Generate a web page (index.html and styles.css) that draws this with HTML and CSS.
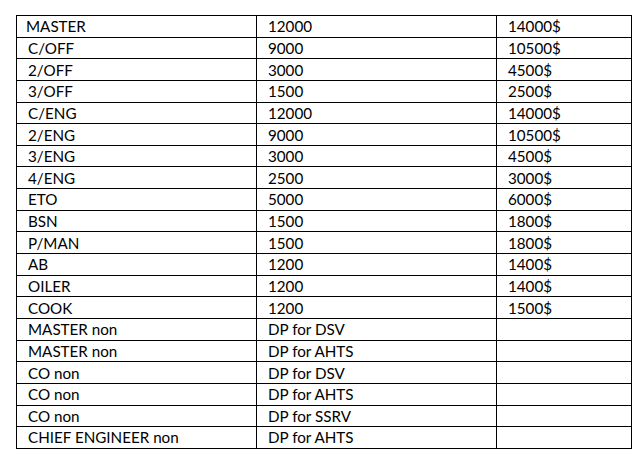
FILE: index.html
```html
<!DOCTYPE html>
<html lang="en">
<head>
<meta charset="utf-8">
<title>Crew rates</title>
<link rel="stylesheet" href="styles.css">
</head>
<body>
<table class="rates">
  <colgroup>
    <col class="c-rank">
    <col class="c-base">
    <col class="c-pay">
  </colgroup>
  <tbody>
    <tr><td class="first">MASTER</td><td>12000</td><td>14000$</td></tr>
    <tr><td>C/OFF</td><td>9000</td><td>10500$</td></tr>
    <tr><td>2/OFF</td><td>3000</td><td>4500$</td></tr>
    <tr><td>3/OFF</td><td>1500</td><td>2500$</td></tr>
    <tr><td>C/ENG</td><td>12000</td><td>14000$</td></tr>
    <tr><td>2/ENG</td><td>9000</td><td>10500$</td></tr>
    <tr><td>3/ENG</td><td>3000</td><td>4500$</td></tr>
    <tr><td>4/ENG</td><td>2500</td><td>3000$</td></tr>
    <tr><td>ETO</td><td>5000</td><td>6000$</td></tr>
    <tr><td>BSN</td><td>1500</td><td>1800$</td></tr>
    <tr><td>P/MAN</td><td>1500</td><td>1800$</td></tr>
    <tr><td>AB</td><td>1200</td><td>1400$</td></tr>
    <tr><td>OILER</td><td>1200</td><td>1400$</td></tr>
    <tr><td>COOK</td><td>1200</td><td>1500$</td></tr>
    <tr><td>MASTER non</td><td>DP for DSV</td><td></td></tr>
    <tr><td>MASTER non</td><td>DP for AHTS</td><td></td></tr>
    <tr><td>CO non</td><td>DP for DSV</td><td></td></tr>
    <tr><td>CO non</td><td>DP for AHTS</td><td></td></tr>
    <tr><td>CO non</td><td>DP for SSRV</td><td></td></tr>
    <tr><td>CHIEF ENGINEER non</td><td>DP for AHTS</td><td></td></tr>
  </tbody>
</table>
</body>
</html>
```
FILE: styles.css
```css
html, body {
  margin: 0;
  padding: 0;
  background: #ffffff;
}
body {
  padding: 15px 0 0 16px;
  font-family: Lato, "Open Sans", sans-serif;
  font-size: 15.2px;
  color: #000000;
}
.rates {
  border-collapse: collapse;
  table-layout: fixed;
  width: 615px;
}
.c-rank { width: 240px; }
.c-base { width: 240px; }
.c-pay { width: 135px; }
.rates td {
  border: 1px solid #000000;
  height: 21.65px;
  padding: 0 0 0 11px;
  line-height: 18px;
  box-sizing: border-box;
  vertical-align: middle;
  white-space: nowrap;
}
.rates td.first {
  padding-left: 9px;
}
```
